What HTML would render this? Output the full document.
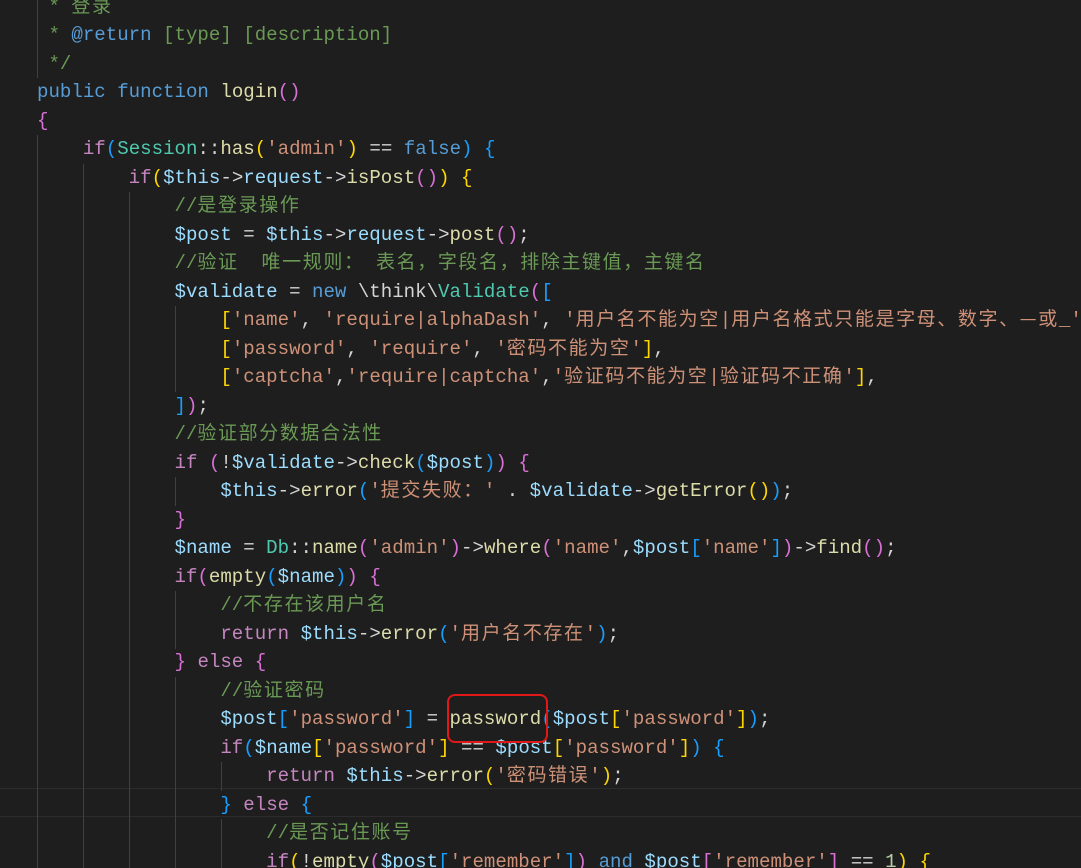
<!DOCTYPE html>
<html><head><meta charset="utf-8"><style>
html,body{margin:0;padding:0;background:#1e1e1e;width:1081px;height:868px;overflow:hidden;position:relative}
.code{position:absolute;left:37px;top:-7.5px;width:1044px;overflow:hidden;font-family:"Liberation Mono","Noto Sans CJK SC",monospace;font-size:19.1px;color:#d4d4d4}
.code div{height:28.5px;line-height:28.5px;overflow:hidden;white-space:pre}
.k{color:#569cd6}.p{color:#c586c0}.v{color:#9cdcfe}.f{color:#dcdcaa}.s{color:#ce9178}.c{color:#6a9955}.t{color:#4ec9b0}
.y{color:#ffd700}.o{color:#da70d6}.b{color:#179fff}
i{font-style:normal;font-family:"Noto Sans CJK SC",sans-serif;font-size:19px;letter-spacing:1.6px;line-height:0}
.g{position:absolute;width:1px;background:#404040}
.cur{position:absolute;left:0;width:1081px;top:788px;height:27px;border-top:1px solid #2c2c2c;border-bottom:1px solid #2c2c2c}
.box{position:absolute;left:447px;top:694px;width:97px;height:45px;border:2px solid #e01818;border-radius:8px}
</style></head><body>
<div class="cur"></div>
<div class="g" style="left:37px;top:-8px;height:86px"></div>
<div class="g" style="left:37px;top:135px;height:733px"></div>
<div class="g" style="left:83px;top:164px;height:704px"></div>
<div class="g" style="left:129px;top:192px;height:676px"></div>
<div class="g" style="left:175px;top:306px;height:86px"></div>
<div class="g" style="left:175px;top:477px;height:29px"></div>
<div class="g" style="left:175px;top:591px;height:58px"></div>
<div class="g" style="left:175px;top:677px;height:191px"></div>
<div class="g" style="left:221px;top:762px;height:29px"></div>
<div class="g" style="left:221px;top:819px;height:49px"></div>
<div class="code"><div><span class="c"> * <i>登录</i></span></div><div><span class="c"> * </span><span class="k">@return</span><span class="c"> [type] [description]</span></div><div><span class="c"> */</span></div><div><span class="k">public</span> <span class="k">function</span> <span class="f">login</span><span class="o">()</span></div><div><span class="o">{</span></div><div>    <span class="p">if</span><span class="b">(</span><span class="t">Session</span>::<span class="f">has</span><span class="y">(</span><span class="s">'admin'</span><span class="y">)</span> == <span class="k">false</span><span class="b">)</span> <span class="b">{</span></div><div>        <span class="p">if</span><span class="y">(</span><span class="v">$this</span>-&gt;<span class="v">request</span>-&gt;<span class="f">isPost</span><span class="o">()</span><span class="y">)</span> <span class="y">{</span></div><div>            <span class="c">//<i>是登录操作</i></span></div><div>            <span class="v">$post</span> = <span class="v">$this</span>-&gt;<span class="v">request</span>-&gt;<span class="f">post</span><span class="o">()</span>;</div><div>            <span class="c">//<i>验证</i>  <i>唯一规则：</i> <i>表名，字段名，排除主键值，主键名</i></span></div><div>            <span class="v">$validate</span> = <span class="k">new</span> \think\<span class="t">Validate</span><span class="o">(</span><span class="b">[</span></div><div>                <span class="y">[</span><span class="s">'name'</span>, <span class="s">'require|alphaDash'</span>, <span class="s">'<i>用户名不能为空</i>|<i>用户名格式只能是字母、数字、—或</i>_'</span></div><div>                <span class="y">[</span><span class="s">'password'</span>, <span class="s">'require'</span>, <span class="s">'<i>密码不能为空</i>'</span><span class="y">]</span>,</div><div>                <span class="y">[</span><span class="s">'captcha'</span>,<span class="s">'require|captcha'</span>,<span class="s">'<i>验证码不能为空</i>|<i>验证码不正确</i>'</span><span class="y">]</span>,</div><div>            <span class="b">]</span><span class="o">)</span>;</div><div>            <span class="c">//<i>验证部分数据合法性</i></span></div><div>            <span class="p">if</span> <span class="o">(</span>!<span class="v">$validate</span>-&gt;<span class="f">check</span><span class="b">(</span><span class="v">$post</span><span class="b">)</span><span class="o">)</span> <span class="o">{</span></div><div>                <span class="v">$this</span>-&gt;<span class="f">error</span><span class="b">(</span><span class="s">'<i>提交失败：</i>'</span> . <span class="v">$validate</span>-&gt;<span class="f">getError</span><span class="y">()</span><span class="b">)</span>;</div><div>            <span class="o">}</span></div><div>            <span class="v">$name</span> = <span class="t">Db</span>::<span class="f">name</span><span class="o">(</span><span class="s">'admin'</span><span class="o">)</span>-&gt;<span class="f">where</span><span class="o">(</span><span class="s">'name'</span>,<span class="v">$post</span><span class="b">[</span><span class="s">'name'</span><span class="b">]</span><span class="o">)</span>-&gt;<span class="f">find</span><span class="o">()</span>;</div><div>            <span class="p">if</span><span class="o">(</span><span class="f">empty</span><span class="b">(</span><span class="v">$name</span><span class="b">)</span><span class="o">)</span> <span class="o">{</span></div><div>                <span class="c">//<i>不存在该用户名</i></span></div><div>                <span class="p">return</span> <span class="v">$this</span>-&gt;<span class="f">error</span><span class="b">(</span><span class="s">'<i>用户名不存在</i>'</span><span class="b">)</span>;</div><div>            <span class="o">}</span> <span class="p">else</span> <span class="o">{</span></div><div>                <span class="c">//<i>验证密码</i></span></div><div>                <span class="v">$post</span><span class="b">[</span><span class="s">'password'</span><span class="b">]</span> = <span class="f">password</span><span class="b">(</span><span class="v">$post</span><span class="y">[</span><span class="s">'password'</span><span class="y">]</span><span class="b">)</span>;</div><div>                <span class="p">if</span><span class="b">(</span><span class="v">$name</span><span class="y">[</span><span class="s">'password'</span><span class="y">]</span> == <span class="v">$post</span><span class="y">[</span><span class="s">'password'</span><span class="y">]</span><span class="b">)</span> <span class="b">{</span></div><div>                    <span class="p">return</span> <span class="v">$this</span>-&gt;<span class="f">error</span><span class="y">(</span><span class="s">'<i>密码错误</i>'</span><span class="y">)</span>;</div><div>                <span class="b">}</span> <span class="p">else</span> <span class="b">{</span></div><div>                    <span class="c">//<i>是否记住账号</i></span></div><div>                    <span class="p">if</span><span class="y">(</span>!<span class="f">empty</span><span class="o">(</span><span class="v">$post</span><span class="b">[</span><span class="s">'remember'</span><span class="b">]</span><span class="o">)</span> <span class="k">and</span> <span class="v">$post</span><span class="o">[</span><span class="s">'remember'</span><span class="o">]</span> == <span style="color:#b5cea8">1</span><span class="y">)</span> <span class="y">{</span></div></div>
<div class="box"></div>
</body></html>
